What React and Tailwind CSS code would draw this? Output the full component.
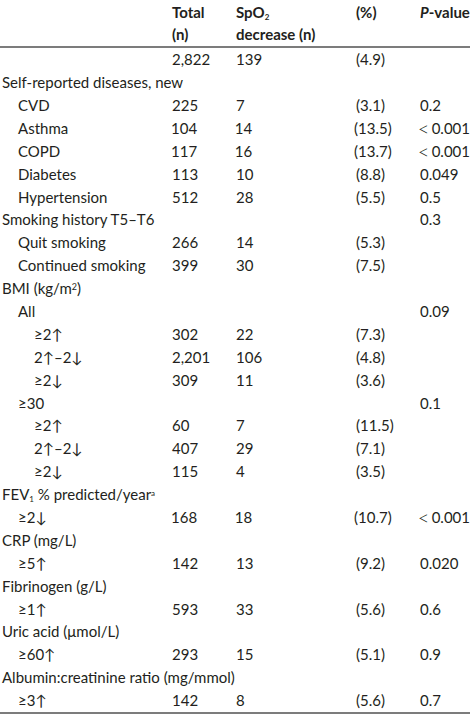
import React from "react";

const rows = [
  { l: "", i: 0, t: "2,822", s: "139", p: "(4.9)", v: "" },
  { l: "Self-reported diseases, new", i: 0 },
  { l: "CVD", i: 1, t: "225", s: "7", p: "(3.1)", v: "0.2" },
  { l: "Asthma", i: 1, t: "104", s: "14", p: "(13.5)", v: "<0.001" },
  { l: "COPD", i: 1, t: "117", s: "16", p: "(13.7)", v: "<0.001" },
  { l: "Diabetes", i: 1, t: "113", s: "10", p: "(8.8)", v: "0.049" },
  { l: "Hypertension", i: 1, t: "512", s: "28", p: "(5.5)", v: "0.5" },
  { l: "Smoking history T5–T6", i: 0, v: "0.3" },
  { l: "Quit smoking", i: 1, t: "266", s: "14", p: "(5.3)" },
  { l: "Continued smoking", i: 1, t: "399", s: "30", p: "(7.5)" },
  { l: "BMI", i: 0, bmi: true },
  { l: "All", i: 1, v: "0.09" },
  { l: "≥2↑", i: 2, t: "302", s: "22", p: "(7.3)" },
  { l: "2↑–2↓", i: 2, t: "2,201", s: "106", p: "(4.8)" },
  { l: "≥2↓", i: 2, t: "309", s: "11", p: "(3.6)" },
  { l: "≥30", i: 1, v: "0.1" },
  { l: "≥2↑", i: 2, t: "60", s: "7", p: "(11.5)" },
  { l: "2↑–2↓", i: 2, t: "407", s: "29", p: "(7.1)" },
  { l: "≥2↓", i: 2, t: "115", s: "4", p: "(3.5)" },
  { l: "FEV", i: 0, fev: true },
  { l: "≥2↓", i: 1, t: "168", s: "18", p: "(10.7)", v: "<0.001" },
  { l: "CRP (mg/L)", i: 0 },
  { l: "≥5↑", i: 1, t: "142", s: "13", p: "(9.2)", v: "0.020" },
  { l: "Fibrinogen (g/L)", i: 0 },
  { l: "≥1↑", i: 1, t: "593", s: "33", p: "(5.6)", v: "0.6" },
  { l: "Uric acid (μmol/L)", i: 0 },
  { l: "≥60↑", i: 1, t: "293", s: "15", p: "(5.1)", v: "0.9" },
  { l: "Albumin:creatinine ratio (mg/mmol)", i: 0 },
  { l: "≥3↑", i: 1, t: "142", s: "8", p: "(5.6)", v: "0.7" },
];

function Label({ r }) {
  if (r.bmi)
    return (
      <span>
        BMI (kg/m<sup className="text-[9px]">2</sup>)
      </span>
    );
  if (r.fev)
    return (
      <span>
        FEV<sub className="text-[8px]">1</sub> % predicted/year
        <sup className="text-[8px]">a</sup>
      </span>
    );
  return <span>{r.l}</span>;
}

function PVal({ v }) {
  if (v && v.startsWith("<"))
    return (
      <span className="flex items-center">
        <span className="inline-block w-[14px] text-[20px] leading-none font-light">&lt;</span>
        <span>{v.slice(1)}</span>
      </span>
    );
  return <span>{v}</span>;
}

export default function App() {
  return (
    <div
      className="w-[470px] h-[722px] overflow-hidden bg-white text-[#231f20] text-[15px] whitespace-nowrap"
      style={{ fontFamily: "Lato, 'Open Sans', sans-serif" }}
    >
      <div className="flex pt-[1px] h-[46px] font-bold leading-[22px]">
        <div className="w-[172px]" />
        <div className="w-[64px]">
          <div>Total</div>
          <div>(n)</div>
        </div>
        <div className="w-[120px]">
          <div>
            SpO<sub className="text-[8px]">2</sub>
          </div>
          <div>decrease (n)</div>
        </div>
        <div className="w-[64px]">(%)</div>
        <div className="italic">
          P<span className="not-italic">-value</span>
        </div>
      </div>
      <div className="h-[2px] bg-[#7c7c7c]" />
      <div>
        {rows.map((r, k) => (
          <div key={k} className="flex h-[22.9px] items-center">
            <div
              className={
                "w-[172px] " +
                (r.i === 0 ? "pl-[2px]" : r.i === 1 ? "pl-[18px]" : "pl-[34px]")
              }
            >
              <Label r={r} />
            </div>
            <div className="w-[64px]">{r.t}</div>
            <div className="w-[120px]">{r.s}</div>
            <div className="w-[64px]">{r.p}</div>
            <div>
              <PVal v={r.v} />
            </div>
          </div>
        ))}
      </div>
      <div className="h-[2px] bg-[#7c7c7c]" />
      <div className="pl-[2px] pt-[6px] leading-[18px]">
        <span className="font-bold">Notes:</span> Data are presented as n (%) unless otherwise indicated.
      </div>
    </div>
  );
}
